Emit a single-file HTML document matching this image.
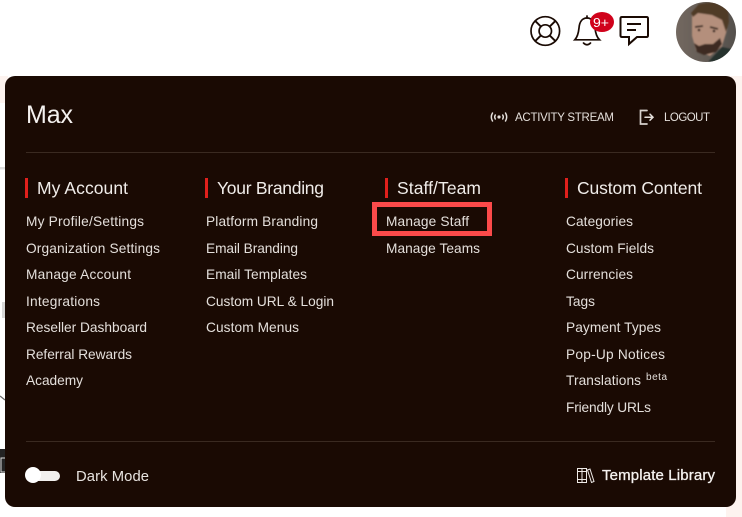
<!DOCTYPE html>
<html><head><meta charset="utf-8"><style>
html,body{margin:0;padding:0;background:#fff;width:742px;height:517px;overflow:hidden}
svg{display:block}
text{font-family:"Liberation Sans",sans-serif}
.i{font-size:13.7px;fill:#e4dfdb}
.h{font-size:17.5px;fill:#f0ece9}
.s{font-size:11.5px;fill:#e4dfdb}
</style></head><body>
<svg width="742" height="517" viewBox="0 0 742 517" xmlns="http://www.w3.org/2000/svg">
<defs>
<clipPath id="av"><circle cx="706" cy="32" r="30"/></clipPath>
<linearGradient id="avb" x1="0" x2="1" y1="0" y2="0"><stop offset="0" stop-color="#736860"/><stop offset="1" stop-color="#54504c"/></linearGradient>
<filter id="bl" x="-10%" y="-10%" width="120%" height="120%"><feGaussianBlur stdDeviation="0.9"/></filter>
</defs>
<rect width="742" height="517" fill="#fff"/>
<rect x="0" y="76" width="8" height="27" fill="#fdf3ef"/>
<rect x="726" y="76" width="16" height="441" fill="#fdf3ef"/>
<rect x="0" y="167" width="6" height="2.5" fill="#dcdcdc"/>
<rect x="2" y="302" width="3" height="16" fill="#d8d8d8"/>
<path d="M0 396 5 400" stroke="#666" stroke-width="1.2"/>
<rect x="0" y="449" width="6" height="24" fill="#232323"/>
<rect x="1" y="458" width="5" height="14" fill="none" stroke="#ddd" stroke-width="1"/>
<rect x="5" y="76" width="731" height="431" rx="10" fill="#1a0a03"/>

<text x="26" y="123" font-size="25" fill="#f4f1ef" textLength="47" lengthAdjust="spacing">Max</text>

<g fill="none" stroke="#e4dfdb" stroke-width="1.500" stroke-linecap="round">
<path d="M492.500 113q-2.400 4 0 8M495.300 115q-1.200 2 0 4M502.700 115q1.200 2 0 4M505.500 113q2.400 4 0 8"/>
<path d="M647 110.500H640.500V124H647" stroke-width="1.700" stroke="#d8d2ce"/>
<path d="M645 117.200H653M650 114.200l3 3-3 3"/>
</g>
<circle cx="499" cy="117" r="1.600" fill="#e4dfdb"/>
<text class="s" x="515" y="121" textLength="99" lengthAdjust="spacing">ACTIVITY STREAM</text>
<text class="s" x="664" y="121" textLength="46" lengthAdjust="spacing">LOGOUT</text>

<rect x="26" y="152" width="689" height="1" fill="#3a2a21"/>
<rect x="26" y="441" width="689" height="1" fill="#3a2a21"/>

<rect x="25" y="178" width="3" height="20" fill="#e0201c"/>
<rect x="205" y="178" width="3" height="20" fill="#e0201c"/>
<rect x="385" y="178" width="3" height="20" fill="#e0201c"/>
<rect x="565" y="178" width="3" height="20" fill="#e0201c"/>
<text class="h" x="37" y="194" textLength="91" lengthAdjust="spacing">My Account</text>
<text class="h" x="217" y="194" textLength="107" lengthAdjust="spacing">Your Branding</text>
<text class="h" x="397" y="194" textLength="84" lengthAdjust="spacing">Staff/Team</text>
<text class="h" x="577" y="194" textLength="125" lengthAdjust="spacing">Custom Content</text>

<text class="i" x="26" y="226" textLength="118" lengthAdjust="spacing">My Profile/Settings</text>
<text class="i" x="26" y="253" textLength="134" lengthAdjust="spacing">Organization Settings</text>
<text class="i" x="26" y="279" textLength="105" lengthAdjust="spacing">Manage Account</text>
<text class="i" x="26" y="306" textLength="74" lengthAdjust="spacing">Integrations</text>
<text class="i" x="26" y="332" textLength="121" lengthAdjust="spacing">Reseller Dashboard</text>
<text class="i" x="26" y="359" textLength="106" lengthAdjust="spacing">Referral Rewards</text>
<text class="i" x="26" y="385" textLength="57" lengthAdjust="spacing">Academy</text>

<text class="i" x="206" y="226" textLength="112" lengthAdjust="spacing">Platform Branding</text>
<text class="i" x="206" y="253" textLength="92" lengthAdjust="spacing">Email Branding</text>
<text class="i" x="206" y="279" textLength="101" lengthAdjust="spacing">Email Templates</text>
<text class="i" x="206" y="306" textLength="128" lengthAdjust="spacing">Custom URL &amp; Login</text>
<text class="i" x="206" y="332" textLength="93" lengthAdjust="spacing">Custom Menus</text>

<rect x="374.500" y="204.500" width="115" height="29" fill="none" stroke="#fb4a4a" stroke-width="5"/>
<text class="i" x="386" y="226" textLength="83" lengthAdjust="spacing">Manage Staff</text>
<text class="i" x="386" y="253" textLength="94" lengthAdjust="spacing">Manage Teams</text>

<text class="i" x="566" y="226" textLength="67" lengthAdjust="spacing">Categories</text>
<text class="i" x="566" y="253" textLength="88" lengthAdjust="spacing">Custom Fields</text>
<text class="i" x="566" y="279" textLength="67" lengthAdjust="spacing">Currencies</text>
<text class="i" x="566" y="306" textLength="29" lengthAdjust="spacing">Tags</text>
<text class="i" x="566" y="332" textLength="95" lengthAdjust="spacing">Payment Types</text>
<text class="i" x="566" y="359" textLength="99" lengthAdjust="spacing">Pop-Up Notices</text>
<text class="i" x="566" y="385" textLength="75" lengthAdjust="spacing">Translations</text>
<text x="646" y="380" font-size="10" fill="#e4dfdb" textLength="21" lengthAdjust="spacing">beta</text>
<text class="i" x="566" y="412" textLength="85" lengthAdjust="spacing">Friendly URLs</text>

<rect x="30" y="471" width="30" height="10" rx="5" fill="#f2f0ee"/>
<circle cx="33" cy="475" r="8" fill="#fff"/>
<text x="76" y="481" font-size="14.800" fill="#e8e4e1" textLength="73" lengthAdjust="spacing">Dark Mode</text>

<g fill="none" stroke="#eeeae7" stroke-width="1">
<path d="M577.500 468.500H582V482.500H577.500ZM582 468.500H586.500V482.500H582ZM577.500 471.500H586.500M577.500 479.500H586.500"/>
<path d="M587.500 470 590 469 594 481.500 591.500 482.500Z"/>
</g>
<text x="602" y="480" font-size="15" fill="#f4f1ef" stroke="#f4f1ef" stroke-width=".3" textLength="113" lengthAdjust="spacing">Template Library</text>

<g fill="none" stroke="#1a0a03" stroke-width="1.700">
<circle cx="545.300" cy="31" r="14.300"/>
<circle cx="545.300" cy="31" r="6.200"/>
<path d="M534.700 20.400 540.900 26.600M555.900 20.400 549.700 26.600M534.700 41.600 540.900 35.400M555.900 41.600 549.700 35.400" stroke-width="1.900"/>
<path d="M574.800 39.800H599.500C596.500 37 595.500 33 595 28 594.500 21.500 591.500 18 587 18 582.500 18 579.500 21.500 579 28 578.500 33 577.500 37 574.800 39.800Z"/>
<path d="M587 18V16M583.500 43Q587 46.500 590.500 43" stroke-linecap="round"/>
<path d="M622 17H646.500Q648 17 648 18.500V35.500Q648 37 646.500 37H637L629 44V37H622Q620.500 37 620.500 35.500V18.500Q620.500 17 622 17Z" stroke-width="2"/>
<path d="M627 24H641M627 30H636" stroke-width="2"/>
</g>
<ellipse cx="602" cy="22" rx="12" ry="10" fill="#d0021b"/>
<text x="593" y="27" font-size="13" fill="#fff" textLength="16" lengthAdjust="spacingAndGlyphs">9+</text>

<g clip-path="url(#av)">
<rect x="676" y="2" width="60" height="60" fill="url(#avb)"/>
<g filter="url(#bl)">
<path d="M692 14 700 6 716 5 728 9 727 30 722 46 710 56 696 50 692 36Z" fill="#b48f7c"/>
<path d="M691 13 699 4 713 2 728 8 729 22 726 32 722 20 712 15 698 13 693 17Z" fill="#4f3b26"/>
<path d="M694 43 699 46 705 44 713 44 720 38 722 44 716 52 704 55 697 52Z" fill="#3d2c22"/>
<path d="M695 27 703 26M710 27 718 29" stroke="#3a2a20" stroke-width="1.800" fill="none"/>
<circle cx="699" cy="30" r="1.300" fill="#2a1d16"/>
<circle cx="714" cy="31" r="1.300" fill="#2a1d16"/>
<path d="M708 62 722 47 736 50V62Z" fill="#26302f"/>
</g>
</g>
</svg>
</body></html>
